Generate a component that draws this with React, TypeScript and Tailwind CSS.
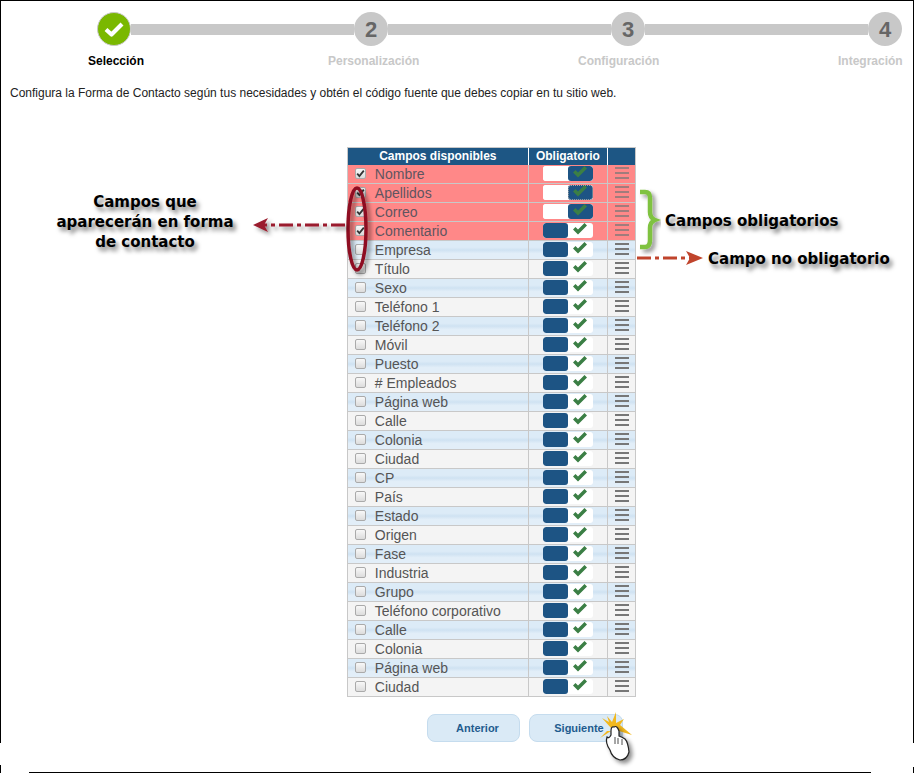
const fields = [
  "Nombre", "Apellidos", "Correo", "Comentario", "Empresa", "Título", "Sexo",
  "Teléfono 1", "Teléfono 2", "Móvil", "Puesto", "# Empleados", "Página web",
  "Calle", "Colonia", "Ciudad", "CP", "País", "Estado", "Origen", "Fase",
  "Industria", "Grupo", "Teléfono corporativo", "Calle", "Colonia", "Página web", "Ciudad",
];

function Check() {
  return (
    <svg width="16" height="13" viewBox="0 0 16 13" className="-mt-[5px]">
      <path d="M1 7.5 L3.5 5 L6 7.5 L12.5 1 L15 3.5 L6 12.5 Z" fill="#3b7f45" />
    </svg>
  );
}

function Toggle({ on, dotted }: { on: boolean; dotted?: boolean }) {
  return (
    <div className="flex w-[50px] h-[15px] rounded-[3px] overflow-hidden bg-white">
      {on ? (
        <>
          <div className="w-[25px] bg-white" />
          <div className={`w-[25px] bg-[#1d5484] rounded-[3px] flex items-center justify-center ${dotted ? "border border-dotted border-[#aaa]" : ""}`}>
            <Check />
          </div>
        </>
      ) : (
        <>
          <div className="w-[25px] bg-[#1d5484] rounded-[3px]" />
          <div className="w-[25px] flex items-center justify-center">
            <Check />
          </div>
        </>
      )}
    </div>
  );
}

function Row({ name, index }: { name: string; index: number }) {
  const required = index < 4;
  const on = index < 3;
  const checked = index === 0 || index === 2 || index === 3 || index === 1;
  let bg = "bg-[#f4f4f4]";
  if (required) bg = "bg-[#ff8888]";
  else if (index % 2 === 0) bg = "bg-[linear-gradient(#dcebf7_0%,#dcebf7_35%,#cfe2f2_50%,#e2eef8_70%,#e2eef8_100%)]";
  return (
    <div className={`flex h-[19px] border-b border-[#c8c8c8] ${bg}`}>
      <div className="w-[27px] flex items-center justify-center pr-[2px] -mt-[2px]">
        <div className="w-[11px] h-[11px] rounded-[2px] border border-[#aaa] bg-[linear-gradient(#f8f8f8,#dcdcdc)] flex items-center justify-center">
          {checked && (
            <svg width="9" height="9" viewBox="0 0 9 9">
              <path d="M1.2 4.6 L3.4 7 L7.8 1.6" fill="none" stroke="#333" strokeWidth="1.8" />
            </svg>
          )}
        </div>
      </div>
      <div className={`w-[154px] pl-[0px] text-[14px] leading-[18px] ${required ? "text-[#5f5560]" : "text-[#555]"}`}>{name}</div>
      <div className="w-[80px] border-l border-[#c8c8c8] flex items-center justify-center pb-[1px]">
        <Toggle on={on} dotted={index === 1} />
      </div>
      <div className="w-[28px] border-l border-[#c8c8c8] flex flex-col items-center justify-center gap-[3px] pb-[2px]">
        <div className={`w-[14px] h-[2px] ${required ? "bg-[#a07c7c]" : "bg-[#777]"}`} />
        <div className={`w-[14px] h-[2px] ${required ? "bg-[#a07c7c]" : "bg-[#777]"}`} />
        <div className={`w-[14px] h-[2px] ${required ? "bg-[#a07c7c]" : "bg-[#777]"}`} />
      </div>
    </div>
  );
}

function StepCircle({ n }: { n: number }) {
  return (
    <div className="w-[34px] h-[34px] rounded-full bg-[#c8c8c8] flex items-center justify-center text-[#666] text-[22px] font-bold">
      {n}
    </div>
  );
}

function Bar() {
  return <div className="flex-1 h-[11px] bg-[#c8c8c8]" />;
}

export default function App() {
  return (
    <div className="relative w-[914px] h-[773px] bg-white font-['Liberation_Sans',Arial,sans-serif] overflow-hidden">
      <div className="h-[743px] border-x border-t border-black">
        {/* Stepper */}
        <div className="flex items-center pl-[96px] pr-[11px] pt-[11px]">
          <div className="w-[34px] h-[34px] rounded-full bg-[#7ab800] border border-[#c8c8c8] flex items-center justify-center">
            <svg width="20" height="16" viewBox="0 0 20 16">
              <path d="M2 8.5 L7.5 13.5 L18 3" fill="none" stroke="#fff" strokeWidth="4.2" strokeLinejoin="round" />
            </svg>
          </div>
          <Bar />
          <StepCircle n={2} />
          <Bar />
          <StepCircle n={3} />
          <Bar />
          <StepCircle n={4} />
        </div>
        <div className="flex mt-[8px] text-[12px] leading-[14px] font-bold text-[#c8c8c8]">
          <span className="ml-[87px] w-[240px] text-black">Selección</span>
          <span className="w-[250px]">Personalización</span>
          <span className="w-[260px]">Configuración</span>
          <span>Integración</span>
        </div>
        <p className="ml-[9px] mt-[18px] text-[12px] leading-[14px] text-[#222]">
          Configura la Forma de Contacto según tus necesidades y obtén el código fuente que debes copiar en tu sitio web.
        </p>

        {/* Tabla de campos */}
        <div className="ml-[346px] mt-[47px] w-[289px] border-x border-t border-[#c8c8c8]">
          <div className="flex h-[17px] bg-[#1d5684] text-white text-[12px] leading-[16px] font-bold text-center">
            <div className="w-[181px]">Campos disponibles</div>
            <div className="w-[80px] border-l border-white">Obligatorio</div>
            <div className="w-[28px] border-l border-white" />
          </div>
          {fields.map((f, i) => (
            <Row key={i} name={f} index={i} />
          ))}
        </div>

        {/* Botones */}
        <div className="flex ml-[426px] mt-[17px] gap-[9px] text-[11px] font-bold text-[#1f5c8e]">
          <button className="w-[93px] h-[28px] pl-[8px] rounded-[8px] bg-[#daeaf6] border border-[#c5dcee]">Anterior</button>
          <button className="w-[94px] h-[28px] pl-[6px] rounded-[8px] bg-[#daeaf6] border border-[#c5dcee]">Siguiente</button>
        </div>
      </div>

      {/* Marco inferior */}
      <div className="flex items-end h-[30px]">
        <div className="w-[1px] h-[8px] bg-black" />
        <div className="ml-[28px] w-[842px] h-[1px] mb-[0px] bg-black" />
        <div className="ml-auto w-[1px] h-[6px] bg-black" />
      </div>

      {/* Anotaciones */}
      <div className="absolute left-[30px] top-[192px] w-[230px] text-center font-['DejaVu_Sans',sans-serif] font-bold text-[15px] leading-[20px] text-black [text-shadow:3px_4px_4px_rgba(0,0,0,0.5)]">
        Campos que
        <br />
        aparecerán en forma
        <br />
        de contacto
      </div>
      <div className="absolute left-[665px] top-[211px] font-['DejaVu_Sans',sans-serif] font-bold text-[15px] leading-[20px] text-black whitespace-nowrap [text-shadow:3px_4px_4px_rgba(0,0,0,0.5)]">
        Campos obligatorios
      </div>
      <div className="absolute left-[708px] top-[249px] font-['DejaVu_Sans',sans-serif] font-bold text-[15px] leading-[20px] text-black whitespace-nowrap [text-shadow:3px_4px_4px_rgba(0,0,0,0.5)]">
        Campo no obligatorio
      </div>

      {/* Flechas, óvalo y llave */}
      <svg className="absolute left-0 top-0 pointer-events-none" width="914" height="773" viewBox="0 0 914 773" fill="none">
        <defs>
          <filter id="sh" x="-30%" y="-30%" width="170%" height="170%">
            <feDropShadow dx="3" dy="3" stdDeviation="2" floodColor="#000" floodOpacity="0.45" />
          </filter>
        </defs>
        <ellipse cx="357" cy="229" rx="9" ry="41" stroke="#8e1020" strokeWidth="3.5" filter="url(#sh)" />
        <g filter="url(#sh)">
          <path d="M345 225 H262" stroke="#9a1b2d" strokeWidth="3" strokeDasharray="14 4 4 4" />
          <path d="M253 225 L268 218 L264 225 L268 232 Z" fill="#9a1b2d" />
        </g>
        <path d="M640 192 H645 Q650 192 650 198 V212 Q650 218 655 220 Q650 222 650 228 V240 Q650 247 645 247 H640" stroke="#7fc241" strokeWidth="4.5" filter="url(#sh)" />
        <g>
          <path d="M637 258 H694" stroke="#c0442c" strokeWidth="3" strokeDasharray="14 4 4 4" />
          <path d="M703 258 L686 251 L690 258 L686 265 Z" fill="#c0442c" />
        </g>
        {/* Destello y mano */}
        <path d="M611 728 L602 718 L609 722 L607 716 L612 722 L616 712 L616 723 L624 719 L620 725 L632 735 L619 731 L615 740 Z M611 731 L600 738 L607 731 Z" fill="#f2b81e" />
        <path d="M611 731 V735 Q609 739 607 737 Q605 743 610 750 Q612 758 620 760 Q627 760 629 752 Q628 742 625 739 Q622 737 619 736 V731 Q617 725 614 727 Q611 726 611 731 Z" fill="#fff" stroke="#222" strokeWidth="1.2" filter="url(#sh)" />
        <path d="M615 737 V744 M618 738 V744 M622 739 V745" stroke="#222" strokeWidth="0.8" />
      </svg>
    </div>
  );
}
